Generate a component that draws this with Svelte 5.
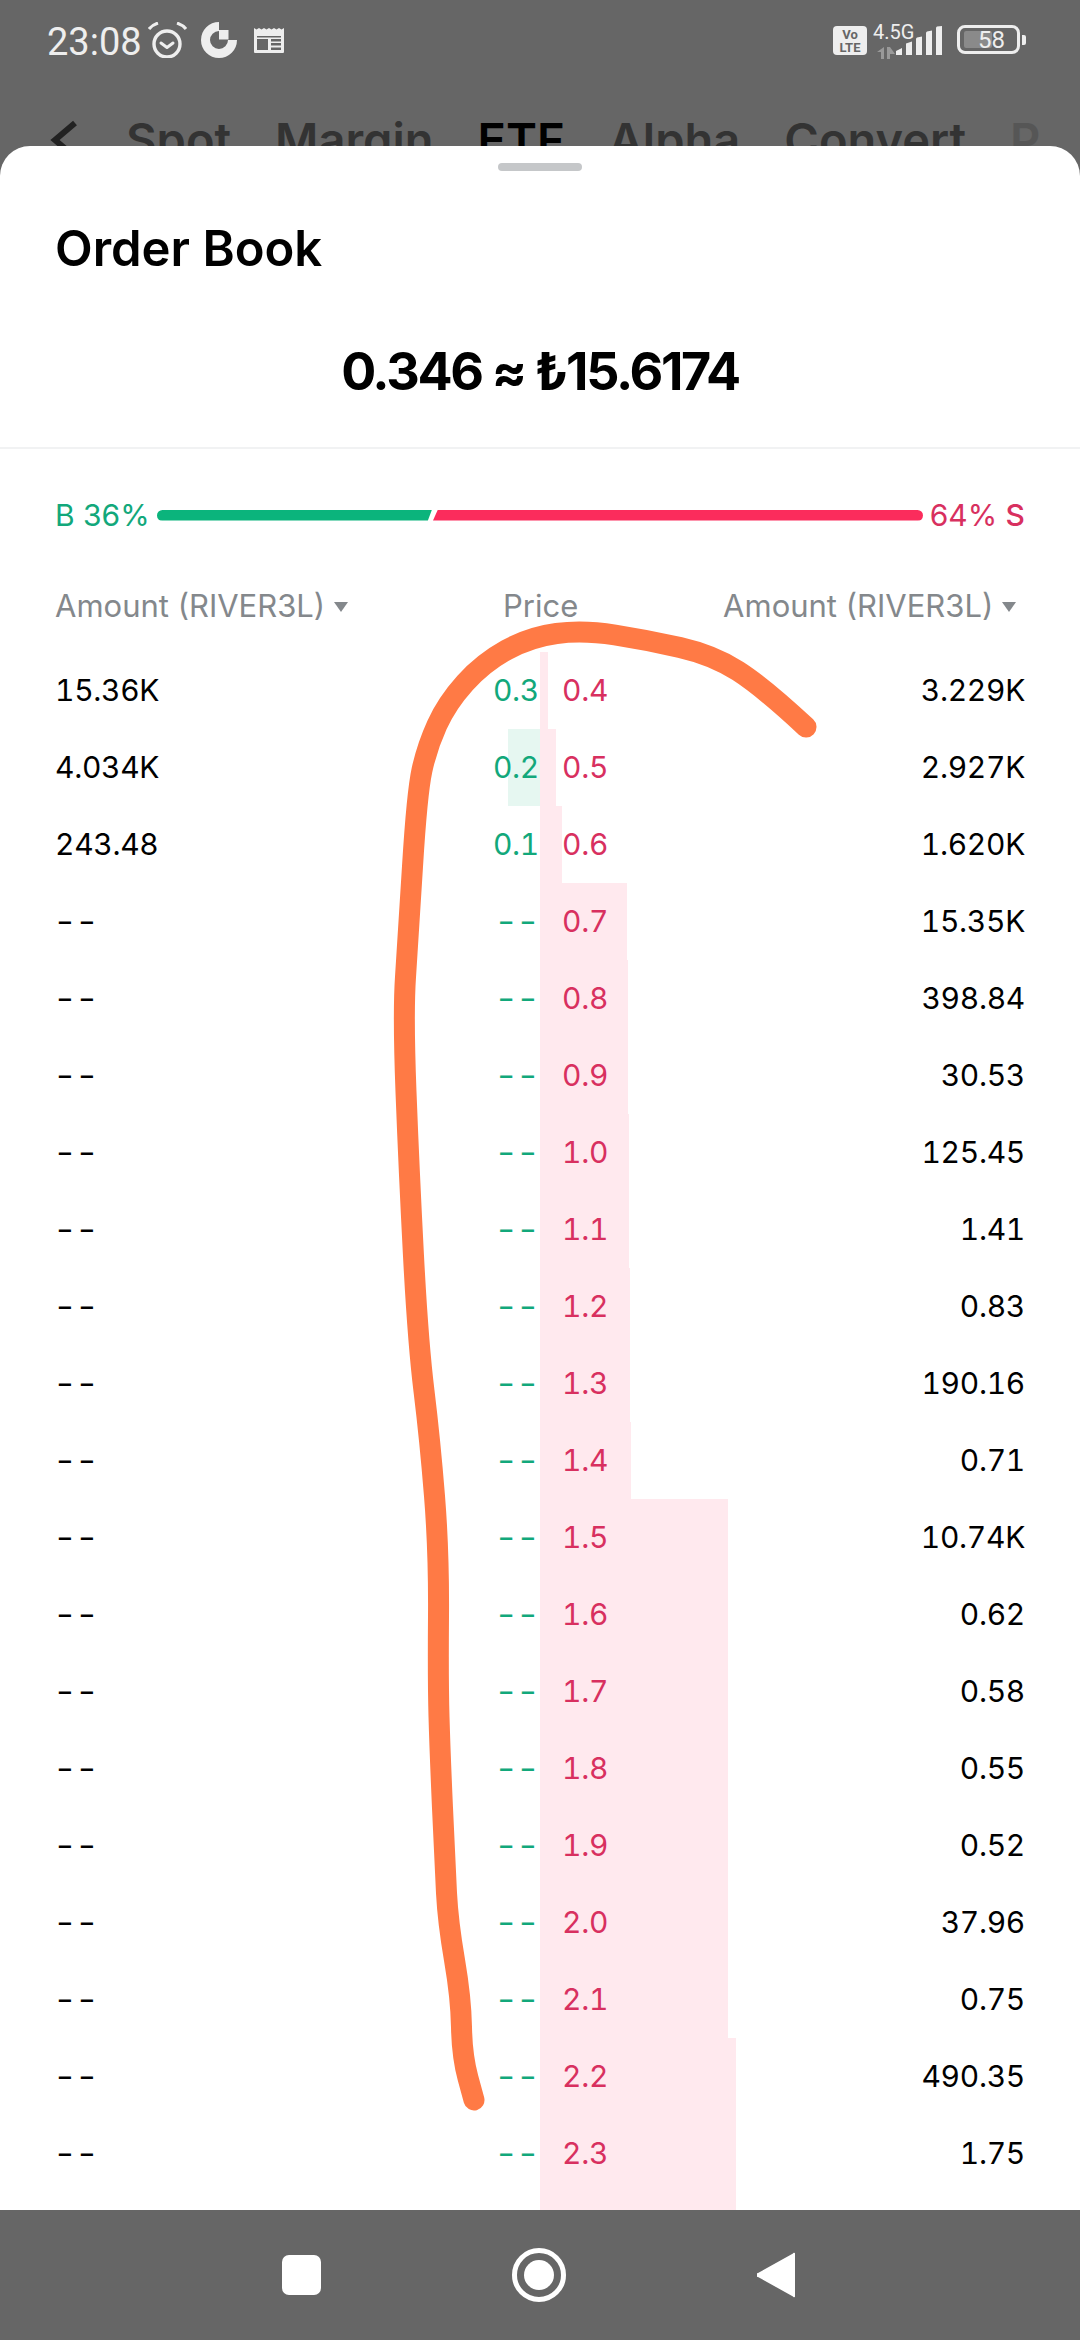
<script>
  const greenBar = 32;
  const rows = [
    ["15.36K", "0.3", "0.4", "3.229K", 0, 8],
    ["4.034K", "0.2", "0.5", "2.927K", greenBar, 16],
    ["243.48", "0.1", "0.6", "1.620K", 0, 22],
    ["--", "--", "0.7", "15.35K", 0, 87],
    ["--", "--", "0.8", "398.84", 0, 88],
    ["--", "--", "0.9", "30.53", 0, 88],
    ["--", "--", "1.0", "125.45", 0, 89],
    ["--", "--", "1.1", "1.41", 0, 89],
    ["--", "--", "1.2", "0.83", 0, 90],
    ["--", "--", "1.3", "190.16", 0, 90],
    ["--", "--", "1.4", "0.71", 0, 91],
    ["--", "--", "1.5", "10.74K", 0, 188],
    ["--", "--", "1.6", "0.62", 0, 188],
    ["--", "--", "1.7", "0.58", 0, 188],
    ["--", "--", "1.8", "0.55", 0, 188],
    ["--", "--", "1.9", "0.52", 0, 188],
    ["--", "--", "2.0", "37.96", 0, 188],
    ["--", "--", "2.1", "0.75", 0, 188],
    ["--", "--", "2.2", "490.35", 0, 196],
    ["--", "--", "2.3", "1.75", 0, 196],
    ["--", "--", "2.4", "--", 0, 196]
  ];

  const tabs = ["Spot", "Margin", "ETF", "Alpha", "Convert"];

  // the orange pen stroke someone scribbled over the screenshot
  const ink = [
    [806, 727], [763, 687], [713, 655], [647, 640], [583, 630], [530, 637], [483, 663],
    [447, 703], [427, 747], [417, 793], [408, 940], [403, 1014], [409, 1170], [418, 1342],
    [430, 1440], [439, 1552], [438, 1681], [440, 1752], [445, 1864], [448, 1922],
    [461, 1998], [462, 2056], [474, 2100]
  ];

  function smooth(pts) {
    let d = `M${pts[0][0]} ${pts[0][1]}`;
    for (let i = 1; i < pts.length - 1; i++) {
      const mx = (pts[i][0] + pts[i + 1][0]) / 2;
      const my = (pts[i][1] + pts[i + 1][1]) / 2;
      d += ` Q${pts[i][0]} ${pts[i][1]} ${mx} ${my}`;
    }
    const last = pts[pts.length - 1];
    return d + ` L${last[0]} ${last[1]}`;
  }
</script>

<div class="page">
  <header class="top">
    <div class="status">
      <div class="cluster left">
        <span class="clock">23:08</span>
        <svg class="alarm" viewBox="0 0 40 36" width="40" height="36">
          <circle cx="19" cy="22" r="13" fill="none" stroke="#eee" stroke-width="3.4" />
          <path d="M13 21l6 4.500 6-4.500" fill="none" stroke="#eee" stroke-width="3" stroke-linecap="round" stroke-linejoin="round" />
          <path d="M1 7Q4 3 10 1M38 7Q35 3 29 1" fill="none" stroke="#eee" stroke-width="3" />
        </svg>
        <svg class="arc" viewBox="0 0 36 36" width="36" height="36">
          <path d="M18 0A18 18 0 1 0 36 18H27A9 9 0 1 1 18 9Z" fill="#eee" />
          <path d="M18 8h9.500v9.500H18z" fill="#eee" />
        </svg>
        <svg class="news" viewBox="0 0 30 26" width="30" height="26">
          <path d="M0 1l2.500 1.500L5 1l2.500 1.500L10 1l2.500 1.500L15 1l2.500 1.500L20 1l2.500 1.500L25 1l2.500 1.500L30 1v24a1 1 0 0 1-1 1H1a1 1 0 0 1-1-1z" fill="#eee" />
          <path d="M3 9h24v1.500H3zM3 12h11v11H3zM17 12h10v2.500H17zM17 16h10v2.500H17zM17 20.500h10V23H17z" fill="#666" />
        </svg>
      </div>
      <div class="cluster right">
        <div class="volte">Vo<br />LTE</div>
        <div class="net">
          <span class="gen">4.5G</span>
          <svg viewBox="0 0 18 12" width="18" height="12">
            <path d="M7 0v12H4V5H0zM10 12V0h3l5 7h-5v5z" fill="#999" />
          </svg>
        </div>
        <svg class="signal" viewBox="0 0 46 29" width="46" height="29">
          <path d="M0 25l6-3v7H0zM10 17.500l6-2V29h-6zM20 13q0-1 1-1.500l5-1V29h-6zM30 7q0-1 1-1.500l5-1V29h-6zM40 2q0-1 1-1.500l5-.5v29h-6z" fill="#eee" />
        </svg>
        <div class="battery">
          <span class="fill"></span>
          <span class="level">58</span>
        </div>
        <span class="tip"></span>
      </div>
    </div>

    <nav class="tabs">
      <svg class="back" viewBox="0 0 28 48" width="28" height="48">
        <path d="M25 3L5 20l20 17" fill="none" stroke="#222" stroke-width="6" />
      </svg>
      {#each tabs as tab}
        <span class="tab" class:current={tab === "ETF"}>{tab}</span>
      {/each}
      <span class="tab faded">P</span>
    </nav>
  </header>

  <main class="sheet">
    <div class="handle"></div>
    <h1>Order Book</h1>
    <p class="last">0.346 ≈ ₺15.6174</p>
    <div class="rule"></div>

    <div class="ratio">
      <span class="buy">B 36%</span>
      <div class="bar">
        <span class="bar-buy"></span>
        <span class="bar-sell"></span>
      </div>
      <span class="sell">64% <b>S</b></span>
    </div>

    <div class="heads">
      <span class="head">Amount (RIVER3L) <i class="caret"></i></span>
      <span class="head price">Price</span>
      <span class="head">Amount (RIVER3L) <i class="caret"></i></span>
    </div>

    <div class="book">
      {#each rows as [bidAmt, bid, ask, askAmt, bidDepth, askDepth]}
        <div class="row">
          <div class="side bid">
            {#if bidDepth}<span class="depth depth-bid" style="width:{bidDepth}px"></span>{/if}
            <span class="amt" class:dash={bidAmt === "--"}>{bidAmt}</span>
            <span class="px px-bid" class:dash={bid === "--"}>{bid}</span>
          </div>
          <div class="side ask">
            <span class="depth depth-ask" style="width:{askDepth}px"></span>
            <span class="px px-ask">{ask}</span>
            <span class="amt">{askAmt}</span>
          </div>
        </div>
      {/each}
    </div>
  </main>

  <footer class="nav">
    <span class="nav-square"></span>
    <span class="nav-home"><span></span></span>
    <svg viewBox="0 0 38 46" width="38" height="46">
      <path d="M36 1.500a1 1 0 0 1 2 .5v42a1 1 0 0 1-2 .5L1 25a2 2 0 0 1 0-4z" fill="#fff" />
    </svg>
  </footer>

  <svg class="ink" viewBox="0 0 1080 2340" width="1080" height="2340">
    <path d={smooth(ink)} fill="none" stroke="#ff7a45" stroke-width="21" stroke-linecap="round" stroke-linejoin="round" />
  </svg>
</div>

<style>
  :global(body) {
    margin: 0;
    background: #666;
  }

  .page {
    position: relative;
    width: 1080px;
    height: 2340px;
    overflow: hidden;
    display: flex;
    flex-direction: column;
    background: #666;
    font-family: Inter, "Noto Sans", sans-serif;
    color: #000;
  }

  .top {
    height: 146px;
    flex: none;
    overflow: hidden;
  }

  .status {
    height: 78px;
    padding: 22px 54px 0 47px;
    box-sizing: border-box;
    display: flex;
    justify-content: space-between;
    align-items: flex-start;
    color: #eee;
  }

  .cluster {
    display: flex;
    align-items: flex-start;
  }

  .clock {
    font: 400 38px/40px Roboto, sans-serif;
    width: 101px;
  }

  .arc {
    margin-left: 13px;
  }

  .news {
    margin: 5px 0 0 17px;
  }

  .right {
    padding-top: 3px;
  }

  .volte {
    width: 34px;
    height: 29px;
    margin-top: 1px;
    border-radius: 4px;
    background: #eee;
    color: #666;
    font: 700 13px/13px Roboto, sans-serif;
    text-align: center;
    padding-top: 2px;
    box-sizing: border-box;
  }

  .net {
    width: 40px;
    margin: -4px 0 0 6px;
    display: flex;
    flex-direction: column;
  }

  .gen {
    font: 400 20px/22px Roboto, sans-serif;
    white-space: nowrap;
    margin-bottom: 4px;
  }

  .net svg {
    margin-left: 4px;
  }

  .signal {
    margin: 1px 0 0 -17px;
  }

  .battery {
    position: relative;
    width: 63px;
    height: 29px;
    margin-left: 15px;
    box-sizing: border-box;
    border: 3px solid #eee;
    border-radius: 8px;
    display: flex;
    align-items: center;
    justify-content: center;
  }

  .fill {
    position: absolute;
    left: 4px;
    top: 3px;
    width: 28px;
    height: 17px;
    border-radius: 2px;
    background: #8a8a8a;
  }

  .level {
    position: relative;
    font: 400 24px/24px Roboto, sans-serif;
    margin-left: 6px;
  }

  .tip {
    width: 4px;
    height: 10px;
    margin: 10px 0 0 2px;
    border-radius: 0 2px 2px 0;
    background: #eee;
  }

  .tabs {
    display: flex;
    align-items: flex-start;
    gap: 44px;
    padding: 38px 0 0 50px;
    position: relative;
  }

  .back {
    margin: 4px 4px 0 0;
    flex: none;
  }

  .tab {
    font-size: 47px;
    line-height: 48px;
    font-weight: 600;
    color: #333;
    white-space: nowrap;
  }

  .tab.current {
    color: #000;
  }

  .tab.faded {
    opacity: 0.3;
  }

  .sheet {
    flex: 1;
    min-height: 0;
    overflow: hidden;
    background: #fff;
    border-radius: 30px 30px 0 0;
    display: flex;
    flex-direction: column;
  }

  .handle {
    width: 84px;
    height: 8px;
    flex: none;
    margin: 17px auto 0;
    border-radius: 4px;
    background: #c5c7c9;
  }

  h1 {
    margin: 50px 0 0 55px;
    font-size: 49px;
    line-height: 56px;
    font-weight: 600;
  }

  .last {
    margin: 65px 0 0;
    text-align: center;
    font-size: 52px;
    line-height: 60px;
    font-weight: 700;
    letter-spacing: -2.300px;
  }

  .rule {
    height: 2px;
    flex: none;
    margin-top: 45px;
    background: #f1f2f3;
  }

  .ratio {
    margin-top: 44px;
    padding: 0 55px;
    height: 44px;
    flex: none;
    display: flex;
    align-items: center;
    justify-content: space-between;
    font-size: 30px;
  }

  .buy {
    color: #12a87b;
  }

  .sell {
    color: #d8305f;
  }

  .sell b {
    font-weight: 500;
  }

  .bar {
    position: absolute;
    left: 157px;
    width: 766px;
    height: 11px;
    display: flex;
    gap: 0;
  }

  .bar-buy {
    width: 275px;
    background: #0bb47c;
    border-radius: 6px 0 0 6px;
    clip-path: polygon(0 0, 100% 0, 98.500% 100%, 0 100%);
  }

  .bar-sell {
    flex: 1;
    margin-left: 1px;
    background: #fb2c5c;
    border-radius: 0 6px 6px 0;
    clip-path: polygon(1% 0, 100% 0, 100% 100%, 0 100%);
  }

  .heads {
    margin-top: 46px;
    padding: 0 64px 0 55px;
    height: 44px;
    flex: none;
    display: flex;
    align-items: center;
    justify-content: space-between;
    color: #84888c;
    font-size: 31px;
    white-space: nowrap;
  }

  .price {
    position: absolute;
    left: 503px;
  }

  .caret {
    display: inline-block;
    margin-left: 0;
    vertical-align: 5px;
    border-left: 7px solid transparent;
    border-right: 7px solid transparent;
    border-top: 10px solid #84888c;
  }

  .book {
    margin-top: 25px;
    flex: 1;
    min-height: 0;
    overflow: hidden;
  }

  .row {
    height: 77px;
    display: flex;
    font-size: 30px;
    letter-spacing: -0.300px;
    font-variant-numeric: tabular-nums;
  }

  .side {
    position: relative;
    width: 540px;
    box-sizing: border-box;
    display: flex;
    align-items: center;
    justify-content: space-between;
    padding-bottom: 2px;
  }

  .bid {
    padding-left: 55px;
    padding-right: 1px;
  }

  .ask {
    padding-left: 22px;
    padding-right: 55px;
  }

  .depth {
    position: absolute;
    top: 0;
    bottom: 0;
  }

  .depth-bid {
    right: 0;
    background: #e6f7f1;
  }

  .depth-ask {
    left: 0;
    background: #ffe9ee;
  }

  .amt,
  .px {
    position: relative;
  }

  .dash {
    font-size: 40px;
    font-weight: 300;
    letter-spacing: -4px;
    margin: 0 2px 0 -3px;
  }

  .px-bid {
    color: #12a87b;
  }

  .px-ask {
    color: #d8305f;
  }

  .nav {
    height: 130px;
    flex: none;
    display: flex;
    align-items: center;
    background: #666;
    position: relative;
    padding-left: 282px;
  }

  .nav-square {
    width: 39px;
    height: 40px;
    border-radius: 7px;
    background: #fff;
  }

  .nav-home {
    width: 54px;
    height: 54px;
    margin-left: 191px;
    box-sizing: border-box;
    border: 5px solid #fff;
    border-radius: 50%;
    display: flex;
    align-items: center;
    justify-content: center;
  }

  .nav-home span {
    width: 30px;
    height: 30px;
    border-radius: 50%;
    background: #fff;
  }

  .nav svg {
    margin-left: 191px;
  }

  .ink {
    position: absolute;
    left: 0;
    top: 0;
    pointer-events: none;
  }
</style>
